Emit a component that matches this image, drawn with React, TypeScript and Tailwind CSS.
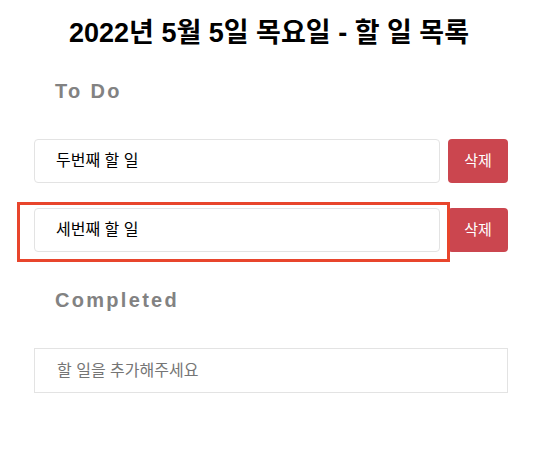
import React from 'react';

const kr = "font-['Liberation_Sans','Noto_Sans_CJK_KR',sans-serif]";

const TodoRow: React.FC<{ text: string; highlight?: boolean }> = ({ text, highlight }) => (
  <div className="relative flex gap-2">
    <div className="flex h-[44px] flex-1 items-center rounded border border-[#e3e3e3] bg-white pl-[21px] text-[16px] text-black">
      {text}
    </div>
    <button className="h-[44px] w-[60px] rounded bg-[#cb464f] text-[15px] text-white">삭제</button>
    {highlight && (
      <div className="pointer-events-none absolute -left-[17px] -top-[6px] h-[60px] w-[433px] border-[3px] border-[#e8452c]" />
    )}
  </div>
);

export default function App() {
  const todos = ['두번째 할 일', '세번째 할 일'];

  return (
    <div className={`h-[470px] w-[538px] bg-white ${kr}`}>
      <h1 className="pt-[16px] text-center text-[27px] font-bold leading-[34px] text-black">
        2022년 5월 5일 목요일 - 할 일 목록
      </h1>
      <div className="ml-[34px] w-[474px]">
        <h2 className="mt-[28px] pl-[21px] text-[20px] font-bold leading-[26px] tracking-[2.3px] text-[#828282]">To Do</h2>
        <div className="mt-[35px] flex flex-col gap-[25px]">
          {todos.map((t, i) => (
            <TodoRow key={t} text={t} highlight={i === 1} />
          ))}
        </div>
        <h2 className="mt-[35px] pl-[21px] text-[20px] font-bold leading-[26px] tracking-[2.3px] text-[#828282]">Completed</h2>
        <input
          className="mt-[35px] h-[45px] w-full border border-[#e3e3e3] pl-[22px] text-[16px] outline-none placeholder:text-[#757575]"
          placeholder="할 일을 추가해주세요"
        />
      </div>
    </div>
  );
}
